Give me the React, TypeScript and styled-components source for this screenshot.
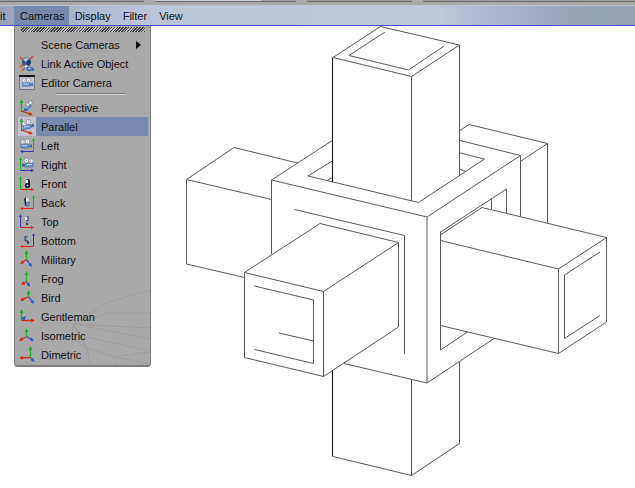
import React from "react";
import styled, { createGlobalStyle } from "styled-components";

const GlobalStyle = createGlobalStyle`
  * { box-sizing: border-box; }
  html, body { margin: 0; background: #fff; }
  body, button { font: 11px/18px "Liberation Sans", Arial, sans-serif; color: #101014; }
`;

const Page = styled.div`
  display: flex;
  flex-direction: column;
  min-height: 100vh;
  overflow: hidden;
`;

const TabStrip = styled.div`
  display: flex;
  gap: 11px;
  height: 6px;
  background: #a9a9a9;
  border-bottom: 1px solid #c4c4c4;
`;

const TabEdge = styled.div<{ $grow: number; $lit?: boolean }>`
  flex: ${(p) => p.$grow} 1 0;
  height: 2px;
  border-bottom: 1px solid #6c6c6c;
  background: ${(p) =>
    p.$lit ? "linear-gradient(90deg, #c8c8d8 75%, #a0a0a0 75%)" : "#9c9c9c"};
`;

const MenuBar = styled.nav`
  display: flex;
  height: 20px;
  background: linear-gradient(90deg, #99a2b8 0, #a9b4ca 11%, #bcc4da 22%, #c1c8dc 68%, #aeb6d2 78%, #98a2b6 91%, #96a0b2 100%);
  border-bottom: 1px solid #4b4bdc;
`;

const BarItem = styled.button<{ $open?: boolean; $cut?: boolean }>`
  padding: ${(p) => (p.$cut ? "0 8px 0 0" : p.$open ? "0 4px 0 6px" : "0 6px")};
  margin: 0;
  border: 0;
  min-width: ${(p) => (p.$cut ? 14 : 0)}px;
  text-align: left;
  background: ${(p) => (p.$open ? "#778aad" : "none")};
`;

const Viewport = styled.main`
  position: relative;
  display: flex;
  flex: 1;
  justify-content: flex-end;
  background: #fff;
`;

const Wireframe = styled.svg`
  display: block;
  width: 475px;
  height: 462px;
  fill: none;
  stroke: #585858;
  stroke-width: 1;
`;

const Menu = styled.div`
  position: absolute;
  top: 0;
  left: 14px;
  width: 137px;
  padding: 0 2px 1px 3px;
  background: #a9a9a9;
  border: 1px solid #7d7d7d;
  border-top: 0;
  border-bottom-width: 2px;
  border-radius: 0 0 4px 4px;
`;

const Grip = styled.div`
  height: 5px;
  margin: 1px 3px 3px;
  background: repeating-linear-gradient(135deg, #404040 0 1px, #bcbcbc 1px 2px);
`;

const Row = styled.button<{ $active?: boolean }>`
  display: flex;
  position: relative;
  align-items: center;
  width: 100%;
  height: 19px;
  padding: 0;
  border: 0;
  text-align: left;
  background: ${(p) => (p.$active ? "#778aad" : "none")};
`;

const IconCell = styled.span<{ $pressed?: boolean }>`
  display: flex;
  width: 18px;
  height: 19px;
  margin-right: 5px;
  background: ${(p) => (p.$pressed ? "#c3c3d0" : "none")};
`;

const Label = styled.span`
  flex: 1;
`;

const SubArrow = styled.svg`
  width: 5px;
  height: 8px;
  margin-right: 7px;
`;

const Separator = styled.hr`
  width: 70px;
  height: 2px;
  margin: 1px 0 3px 38px;
  border: 0;
  border-top: 1px solid #858585;
  background: #d0d0d0;
`;

const Ghost = styled.svg`
  position: absolute;
  right: 0;
  bottom: 0;
  width: 78px;
  height: 76px;
  fill: none;
  stroke: #a09c9e;
`;

const GREEN = "#16b41c";
const RED = "#d42814";
const BLUE = "#2358c8";
const NAVY = "#3434b4";

type Pt = [number, number];

function Arrow({ from, to, color, bold }: { from: Pt; to: Pt; color: string; bold?: boolean }) {
  const dx = to[0] - from[0];
  const dy = to[1] - from[1];
  const len = Math.hypot(dx, dy);
  const ux = dx / len;
  const uy = dy / len;
  const head = bold ? 4 : 3;
  const half = bold ? 1.9 : 1.4;
  const bx = to[0] - ux * head;
  const by = to[1] - uy * head;
  return (
    <g stroke={color} fill={color}>
      <path d={`M${from} L${bx},${by}`} strokeWidth={bold ? 1.3 : 1} />
      <path stroke="none" d={`M${to} L${bx - uy * half},${by + ux * half} L${bx + uy * half},${by - ux * half}Z`} />
    </g>
  );
}

const FilmCamera = ({ transform }: { transform?: string }) => (
  <g transform={transform}>
    <path d="M3 10h8v4H3z" fill="#6f96cc" stroke="#4468a0" strokeWidth=".6" />
    <path d="M11 11.5l3-1.5v4l-3-1z" fill="#426fa9" />
    <circle cx="5" cy="8" r="2.1" fill="#edf2f4" stroke="#7d8591" strokeWidth=".6" />
    <circle cx="9.5" cy="7.5" r="2.3" fill="#edf2f4" stroke="#7d8591" strokeWidth=".6" />
    <path d="M5 8h.8M9 7.5h1" stroke="#5d6b80" strokeWidth=".8" />
    <path d="M4 11.5h5" stroke="#b6d0ec" />
  </g>
);

const EndCamera = ({ kind }: { kind: string }) => (
  <g>
    {kind === "front" && (
      <>
        <path d="M8 7q0-2 2-2t2 2v6H8z" fill="#22242b" />
        <path d="M8 6h2v3H8z" fill="#f2f2f2" />
        <circle cx="9.5" cy="11.5" r="2.6" fill="#202530" />
        <circle cx="9.5" cy="11.5" r="1" fill="#98b6dc" />
      </>
    )}
    {kind === "back" && (
      <>
        <path d="M6 6l2-2 1 2v7H7z" fill="#303136" />
        <path d="M8 5q3-1 3 2v3H8z" fill="#e0e4e6" />
        <path d="M8 9h3v4H8z" fill="#7899c4" stroke="#354664" strokeWidth=".6" />
      </>
    )}
    {kind === "top" && (
      <>
        <path d="M7 5h3v3H7z" fill="#e5e5e5" />
        <path d="M10 4v5H8" stroke="#262b34" fill="none" />
        <path d="M8 9h2v2H8z" fill="#7595bc" />
        <path d="M8 11h2v2H8z" fill="#414750" />
      </>
    )}
    {kind === "bottom" && (
      <>
        <path d="M7 5h3v5H7z" fill="#507ba8" />
        <path d="M7 5v5h3" stroke="#2c4660" fill="none" />
        <path d="M9 10h2v3H9z" fill="#334969" />
        <path d="M9 6v3" stroke="#a6c4df" />
      </>
    )}
  </g>
);

const TRIADS: Record<string, { o: Pt; g: Pt; r: Pt; b: Pt }> = {
  military: { o: [8.5, 9.5], g: [8.5, 0], r: [2, 14], b: [14, 17] },
  frog: { o: [8.5, 12.5], g: [8.5, 2], r: [3, 16], b: [12, 18] },
  bird: { o: [10.5, 8.5], g: [10.5, 2], r: [2, 13], b: [16, 16] },
  gentleman: { o: [3.5, 13.5], g: [3.5, 2], r: [17, 13.5], b: [8, 9] },
  isometric: { o: [8.5, 10.5], g: [8.5, 2], r: [1, 15], b: [16, 15] },
  dimetric: { o: [12.5, 12.5], g: [12.5, 1], r: [1, 13], b: [16.5, 17] },
};

const FRAMES: Record<string, { side: string; base: string; right: boolean }> = {
  left: { side: GREEN, base: NAVY, right: true },
  right: { side: GREEN, base: NAVY, right: false },
  front: { side: GREEN, base: RED, right: false },
  back: { side: GREEN, base: RED, right: true },
  top: { side: NAVY, base: RED, right: false },
  bottom: { side: NAVY, base: RED, right: true },
};

function MenuIcon({ kind }: { kind: string }) {
  const triad = TRIADS[kind];
  const frame = FRAMES[kind];
  const x = frame && frame.right ? 15.5 : 2.5;
  return (
    <svg width="18" height="19" viewBox="0 0 18 19" aria-hidden="true">
      {kind === "link" && (
        <>
          <path d="M2 3l4 4M15 2l-4 4M2 13l5-4M4 17l4-5" stroke="#c06058" strokeWidth="1.8" />
          <circle cx="8.5" cy="8" r="4.6" fill="#3c578c" />
          <path d="M5 6q3-4 6-1l-3 3z" fill="#adc0dd" />
          <path d="M9 6l4 2-3 4z" fill="#1c3160" />
          <circle cx="8" cy="12.5" r="1.8" fill="#e4eaf0" stroke="#65728c" strokeWidth=".6" />
          <path d="M8 13h5l3 1v3H9z" fill="#3f76bc" />
          <path d="M10 14.5h3" stroke="#b4d2ee" />
        </>
      )}
      {kind === "editor" && (
        <>
          <path d="M1.5 2.5h15v14h-15z" fill="#bfc0c8" stroke="#777a88" />
          <path d="M1 3h16" stroke="#15151c" strokeWidth="2" />
          <FilmCamera transform="translate(1.5 0) scale(.95)" />
        </>
      )}
      {(kind === "perspective" || kind === "parallel") && (
        <>
          <Arrow from={[3.5, 14]} to={[3.5, 1]} color={GREEN} bold />
          <Arrow from={[3, 13]} to={[15, 17]} color={RED} bold />
          {kind === "perspective" ? (
            <>
              <path d="M6 11l5-5 3 2-5 5H6z" fill="#527dbd" />
              <path d="M5 13l3-3 1 3z" fill="#315c9e" />
              <path d="M8 10l3-2" stroke="#b6d0ec" />
              <circle cx="10" cy="6.5" r="1.8" fill="#e7edf0" stroke="#6f7a86" strokeWidth=".6" />
              <circle cx="12.5" cy="4.8" r="1.8" fill="#e7edf0" stroke="#6f7a86" strokeWidth=".6" />
            </>
          ) : (
            <FilmCamera transform="rotate(-14 9 10) translate(2 -2)" />
          )}
        </>
      )}
      {frame && (
        <>
          {kind === "left" && <FilmCamera transform="translate(0 -2)" />}
          {kind === "right" && <FilmCamera transform="matrix(-1 0 0 1 18 -2)" />}
          <EndCamera kind={kind} />
          <Arrow from={[x, 15]} to={[x, 2]} color={frame.side} />
          <Arrow from={[x, 15.5]} to={[frame.right ? 2 : 16, 15.5]} color={frame.base} />
        </>
      )}
      {triad && (
        <>
          <Arrow from={triad.o} to={triad.b} color={BLUE} bold />
          <Arrow from={triad.o} to={triad.r} color={RED} bold />
          <Arrow from={triad.o} to={triad.g} color={GREEN} bold />
        </>
      )}
    </svg>
  );
}

const VIEWS = [
  "Perspective", "Parallel", "Left", "Right", "Front", "Back", "Top",
  "Bottom", "Military", "Frog", "Bird", "Gentleman", "Isometric", "Dimetric",
];

function CamerasMenu() {
  return (
    <Menu role="menu" aria-label="Cameras">
      <Ghost viewBox="0 0 78 76" aria-hidden="true">
        <path d="M78 1L36 13 1 35l-1 14 15 10 3 17M1 35L36 24H78M1 35L78 39M1 35L78 50M1 45L78 62M15 59l28 9 35-5M43 68v8M43 68l35 7M1 35l14 24" />
      </Ghost>
      <Grip />
      <Row role="menuitem">
        <IconCell />
        <Label>Scene Cameras</Label>
        <SubArrow viewBox="0 0 5 8" aria-hidden="true"><path d="M0 0l5 4-5 4z" /></SubArrow>
      </Row>
      <Row role="menuitem"><IconCell><MenuIcon kind="link" /></IconCell><Label>Link Active Object</Label></Row>
      <Row role="menuitem"><IconCell><MenuIcon kind="editor" /></IconCell><Label>Editor Camera</Label></Row>
      <Separator />
      {VIEWS.map((name) => (
        <Row key={name} role="menuitem" $active={name === "Parallel"}>
          <IconCell $pressed={name === "Parallel"}><MenuIcon kind={name.toLowerCase()} /></IconCell>
          <Label>{name}</Label>
        </Row>
      ))}
    </Menu>
  );
}

const EDGES = [
  "M333 57.5L380.5 26.5 459.5 45 411.5 76.5ZM411.5 76.5V201M459.5 45V175",
  "M385 32L349 55.5 408.5 70 444 46",
  "M333 140L271.5 180 427 217 520.5 155.5 460 140.5",
  "M333 160.5L308 176 418.5 202.5 484.5 159 460 153M333 177L327 180.5M460 169.5L465.5 171",
  "M460 130.5L469 124.5 547.5 143.5 521 161M547.5 143.5V223",
  "M271.5 199.5L186.5 179.5 234 147.5 297.5 163M186.5 179.5V264L244.5 277.5",
  "M271.5 180V254.5M294.5 209.5L404.5 235.5V354M427 217V383M344 363.5L427 383 494 338.5M520.5 155.5V216.5",
  "M244.5 272.5L320 223.5 398.5 242.5 323.5 291.5ZM244.5 272.5V357.5L323.5 376.5 398.5 327V242.5M323.5 291.5V376.5",
  "M254.5 286L313.5 300V363.5L254.5 349.5M279 333L313.5 341",
  "M440.5 240.5L558.5 269 606.5 237.5 482 207.5 441 234.5M440.5 232L506.5 189V213M491.5 198.5V209",
  "M440.5 231.5V350L467.5 332M440.5 325.5L558.5 353.5 606.5 322V237.5M558.5 269V353.5",
  "M600 252L564.5 275V338.5L600 315.5",
  "M333 456.5L411.5 475.5 459.5 443.5V362M411.5 379.5V475.5",
];

export default function App() {
  return (
    <Page>
      <GlobalStyle />
      <TabStrip>
        <TabEdge $grow={144} />
        <TabEdge $grow={141} $lit />
        <TabEdge $grow={105} />
        <TabEdge $grow={212} />
      </TabStrip>
      <MenuBar>
        <BarItem $cut>it</BarItem>
        <BarItem $open aria-expanded="true">Cameras</BarItem>
        <BarItem>Display</BarItem>
        <BarItem>Filter</BarItem>
        <BarItem>View</BarItem>
      </MenuBar>
      <Viewport>
        <Wireframe viewBox="160 26 475 462" role="img" aria-label="Parallel view of crossed boxes">
          <path d={EDGES.join("")} />
          <path d="M332.5 57.5V182M332.5 370.5V456.5" stroke="#101010" />
        </Wireframe>
        <CamerasMenu />
      </Viewport>
    </Page>
  );
}
